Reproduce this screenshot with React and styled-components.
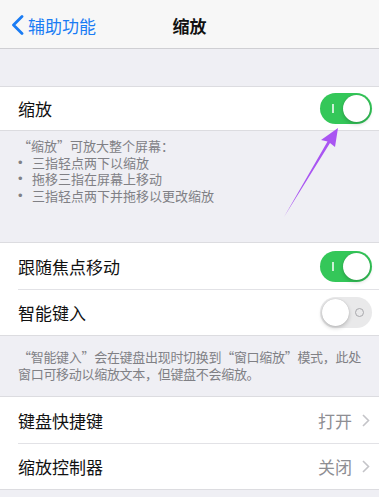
import React from "react";
import styled, { createGlobalStyle } from "styled-components";

const GlobalStyle = createGlobalStyle`
  html, body {
    margin: 0;
    padding: 0;
    background: #efeff4;
  }
  body {
    font-family: "Noto Sans CJK SC", "Noto Sans", sans-serif;
  }
`;

const Page = styled.div`
  position: relative;
  width: 379px;
  height: 497px;
  overflow: hidden;
  background: #efeff4;
`;

const NavBar = styled.div`
  position: relative;
  height: 48px;
  display: flex;
  align-items: center;
  background: #f7f7f7;
  border-bottom: 1px solid #cfcfd3;
`;

const BackButton = styled.div`
  display: flex;
  align-items: center;
  gap: 4px;
  padding-left: 11px;
  padding-top: 2px;
  color: #1a7cf4;
  font-size: 17px;
`;

const NavTitle = styled.div`
  position: absolute;
  left: 0;
  right: 0;
  top: 2px;
  bottom: 0;
  display: flex;
  align-items: center;
  justify-content: center;
  font-size: 17px;
  font-weight: 600;
  color: #111;
  pointer-events: none;
`;

const Spacer = styled.div`
  height: ${(p) => p.h}px;
`;

const Group = styled.div`
  background: #fff;
  border-top: ${(p) => (p.top ? "1px solid #dcdce0" : "none")};
  border-bottom: 1px solid #dcdce0;
`;

const Row = styled.div`
  display: flex;
  align-items: center;
  height: ${(p) => p.h || 46}px;
  margin-left: 18px;
  padding-right: 7px;
  border-top: ${(p) => (p.divider ? "1px solid #e2e2e6" : "none")};
  box-sizing: border-box;
`;

const Label = styled.div`
  flex: 1;
  font-size: 17px;
  color: #111;
`;

const Value = styled.div`
  display: flex;
  align-items: center;
  gap: 10px;
  font-size: 17px;
  color: #8e8e93;
  padding-right: 2px;
`;

const Footer = styled.div`
  padding: ${(p) => p.pad};
  font-size: 13px;
  line-height: ${(p) => p.lh || 16.5}px;
  letter-spacing: ${(p) => p.ls || 0}px;
  color: #808085;
`;

const Bullet = styled.div`
  display: flex;
  gap: 6px;
`;

const Dot = styled.span`
  width: 8px;
  font-family: "Liberation Sans", sans-serif;
  text-align: left;
`;

const Track = styled.div`
  position: relative;
  width: 52px;
  height: 31px;
  border-radius: 16px;
  box-sizing: border-box;
  background: ${(p) => (p.on ? "#34c759" : "#e9e9ea")};
`;

const Knob = styled.div`
  position: absolute;
  top: 2px;
  left: ${(p) => (p.on ? "23px" : "2px")};
  width: 27px;
  height: 27px;
  border-radius: 50%;
  background: #fff;
  box-shadow: 0 2px 4px rgba(0, 0, 0, 0.2), 0 0 1px rgba(0, 0, 0, 0.2);
`;

const OnMark = styled.div`
  position: absolute;
  left: 12px;
  top: 11px;
  width: 1.5px;
  height: 9px;
  background: rgba(255, 255, 255, 0.75);
`;

const OffMark = styled.div`
  position: absolute;
  right: 8px;
  top: 11px;
  width: 9px;
  height: 9px;
  box-sizing: border-box;
  border: 1.2px solid #a8a8ac;
  border-radius: 50%;
`;

const Arrow = styled.svg`
  position: absolute;
  left: 0;
  top: 0;
  pointer-events: none;
`;

const Toggle = ({ on }) => (
  <Track on={on ? 1 : 0}>
    {on ? <OnMark /> : <OffMark />}
    <Knob on={on ? 1 : 0} />
  </Track>
);

const Chevron = () => (
  <svg width="8" height="13" viewBox="0 0 8 13">
    <path d="M1 1l5.5 5.5L1 12" fill="none" stroke="#c4c4c8" strokeWidth="1.6" />
  </svg>
);

const bullets = ["三指轻点两下以缩放", "拖移三指在屏幕上移动", "三指轻点两下并拖移以更改缩放"];

export default function App() {
  return (
    <Page>
      <GlobalStyle />
      <NavBar>
        <BackButton>
          <svg width="13" height="20" viewBox="0 0 13 20">
            <path
              d="M11 1.5L2.5 10l8.5 8.5"
              fill="none"
              stroke="#1a7cf4"
              strokeWidth="2.8"
              strokeLinecap="round"
              strokeLinejoin="round"
            />
          </svg>
          <span>辅助功能</span>
        </BackButton>
        <NavTitle>缩放</NavTitle>
      </NavBar>
      <Spacer h={37} />
      <Group top>
        <Row h={43}>
          <Label>缩放</Label>
          <Toggle on />
        </Row>
      </Group>
      <Footer pad="7px 18px 0">
        <div>“缩放”可放大整个屏幕：</div>
        {bullets.map((b) => (
          <Bullet key={b}>
            <Dot>•</Dot>
            <span>{b}</span>
          </Bullet>
        ))}
      </Footer>
      <Spacer h={38} />
      <Group top>
        <Row>
          <Label>跟随焦点移动</Label>
          <Toggle on />
        </Row>
        <Row divider>
          <Label>智能键入</Label>
          <Toggle />
        </Row>
      </Group>
      <Footer pad="12px 6px 0 18px" lh={17} ls={-0.3}>
        “智能键入”会在键盘出现时切换到“窗口缩放”模式，此处窗口可移动以缩放文本，但键盘不会缩放。
      </Footer>
      <Spacer h={14} />
      <Group top>
        <Row>
          <Label>键盘快捷键</Label>
          <Value>
            打开 <Chevron />
          </Value>
        </Row>
        <Row divider>
          <Label>缩放控制器</Label>
          <Value>
            关闭 <Chevron />
          </Value>
        </Row>
      </Group>
      <Arrow width="379" height="497" viewBox="0 0 379 497">
        <path
          d="M284 217 L327.5 141.5 L321 140 L338 128 L335 147 L330 143 Z"
          fill="#a955f2"
        />
      </Arrow>
    </Page>
  );
}
